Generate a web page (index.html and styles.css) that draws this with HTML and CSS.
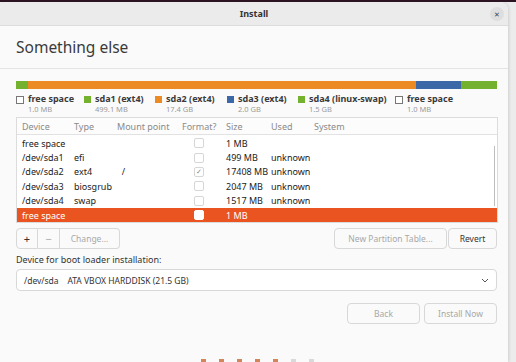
FILE: index.html
```html
<!DOCTYPE html>
<html lang="en">
<head>
  <meta charset="UTF-8" />
  <title>Install</title>
  <link rel="stylesheet" href="styles.css">
</head>
<body>
  <div class="window">
    <header class="titlebar">
      Install
      <span class="close">&#x2715;</span>
    </header>

    <div class="heading">Something else</div>

    <div class="content">
      <div class="disk-bar">
        <span class="seg green" style="width:12px"></span>
        <span class="seg orange" style="width:388px"></span>
        <span class="seg blue" style="width:45px"></span>
        <span class="seg green" style="width:36px"></span>
      </div>

      <div class="legend">
        <div class="legend-item" style="width:68px"><i class="sq empty"></i><div><b>free space</b><small>1.0 MB</small></div></div>
        <div class="legend-item" style="width:71px"><i class="sq green"></i><div><b>sda1 (ext4)</b><small>499.1 MB</small></div></div>
        <div class="legend-item" style="width:72px"><i class="sq orange"></i><div><b>sda2 (ext4)</b><small>17.4 GB</small></div></div>
        <div class="legend-item" style="width:71px"><i class="sq blue"></i><div><b>sda3 (ext4)</b><small>2.0 GB</small></div></div>
        <div class="legend-item" style="width:97px"><i class="sq green"></i><div><b>sda4 (linux-swap)</b><small>1.5 GB</small></div></div>
        <div class="legend-item"><i class="sq empty"></i><div><b>free space</b><small>1.0 MB</small></div></div>
      </div>

      <div class="table">
        <div class="row head">
          <span class="c-dev">Device</span>
          <span class="c-type">Type</span>
          <span class="c-mount">Mount point</span>
          <span class="c-fmt">Format?</span>
          <span class="c-size">Size</span>
          <span class="c-used">Used</span>
          <span>System</span>
        </div>
        <div class="rows">
          <div class="row">
            <span class="c-dev">free space</span><span class="c-type"></span><span class="c-mount"></span>
            <span class="c-fmt"><i class="cb"></i></span><span class="c-size">1 MB</span><span class="c-used"></span>
          </div>
          <div class="row">
            <span class="c-dev">/dev/sda1</span><span class="c-type">efi</span><span class="c-mount"></span>
            <span class="c-fmt"><i class="cb"></i></span><span class="c-size">499 MB</span><span class="c-used">unknown</span>
          </div>
          <div class="row">
            <span class="c-dev">/dev/sda2</span><span class="c-type">ext4</span><span class="c-mount">&nbsp;&nbsp;/</span>
            <span class="c-fmt"><i class="cb">&#x2713;</i></span><span class="c-size">17408 MB</span><span class="c-used">unknown</span>
          </div>
          <div class="row">
            <span class="c-dev">/dev/sda3</span><span class="c-type">biosgrub</span><span class="c-mount"></span>
            <span class="c-fmt"><i class="cb"></i></span><span class="c-size">2047 MB</span><span class="c-used">unknown</span>
          </div>
          <div class="row">
            <span class="c-dev">/dev/sda4</span><span class="c-type">swap</span><span class="c-mount"></span>
            <span class="c-fmt"><i class="cb"></i></span><span class="c-size">1517 MB</span><span class="c-used">unknown</span>
          </div>
          <div class="row selected">
            <span class="c-dev">free space</span><span class="c-type"></span><span class="c-mount"></span>
            <span class="c-fmt"><i class="cb"></i></span><span class="c-size">1 MB</span><span class="c-used"></span>
          </div>
          <span class="scrollbar"></span>
        </div>
      </div>

      <div class="toolbar">
        <div class="btn-group">
          <button class="btn sq-btn">+</button>
          <button class="btn sq-btn dim">&minus;</button>
          <button class="btn dim change">Change...</button>
        </div>
        <div class="btn-group right">
          <button class="btn dim npt">New Partition Table...</button>
          <button class="btn revert">Revert</button>
        </div>
      </div>

      <div class="boot-label">Device for boot loader installation:</div>
      <div class="select">
        <span>/dev/sda&nbsp;&nbsp;&nbsp;&nbsp;ATA VBOX HARDDISK (21.5 GB)</span>
        <svg width="8" height="5" viewBox="0 0 8 5"><path d="M1 1l3 3 3-3" fill="none" stroke="#555" stroke-width="1"/></svg>
      </div>

      <div class="actions">
        <button class="btn dim act">Back</button>
        <button class="btn dim act">Install Now</button>
      </div>

      <div class="dots">
        <i class="on"></i><i class="on"></i><i class="on"></i><i class="on"></i><i class="on"></i><i></i><i></i>
      </div>
    </div>
  </div>
</body>
</html>
```

FILE: styles.css
```css
body {
  margin: 0;
  background: #ececec;
  font-family: "Noto Sans", "Open Sans", sans-serif;
  color: #3d3d3d;
  overflow: hidden;
  border-top: 2px solid #2b1421;
}

.window {
  width: 508px;
  height: 360px;
  background: #fafafa;
  border-radius: 8px 8px 0 0;
  box-shadow: 1px 0 3px rgba(0, 0, 0, 0.12);
  overflow: hidden;
}

.titlebar {
  height: 23px;
  background: #ebebeb;
  border-bottom: 1px solid #dcdcdc;
  display: flex;
  align-items: center;
  justify-content: center;
  font-size: 9px;
  font-weight: bold;
  color: #333;
  position: relative;
}

.close {
  position: absolute;
  right: 4px;
  top: 5px;
  width: 14px;
  height: 14px;
  border-radius: 50%;
  background: #dedede;
  font-size: 7px;
  font-weight: normal;
  display: flex;
  align-items: center;
  justify-content: center;
  color: #444;
}

.heading {
  height: 42px;
  padding-left: 16px;
  display: flex;
  align-items: center;
  font-size: 15.5px;
  color: #3a3a3a;
  border-bottom: 1px solid #e4e4e4;
}

.content {
  padding: 12px 11px 0 16px;
}

.disk-bar {
  display: flex;
  height: 8px;
  width: 481px;
}

.seg { display: block; height: 100%; }
.green { background: #73b12f; }
.orange { background: #ec8a23; }
.blue { background: #3c68a8; }

.legend {
  display: flex;
  margin-top: 5px;
  height: 23px;
}

.legend-item {
  display: flex;
  flex-shrink: 0;
  gap: 4px;
  font-size: 9px;
  line-height: 10px;
}

.legend-item b {
  display: block;
  font-weight: bold;
  color: #3a3a3a;
}

.legend-item small {
  display: block;
  font-size: 7.5px;
  line-height: 10px;
  color: #9a9a9a;
}

.sq {
  display: block;
  width: 7px;
  height: 7px;
  margin-top: 2px;
}

.sq.empty {
  width: 6px;
  height: 6px;
  border: 1px solid #777;
  background: #fff;
}

.table {
  width: 480px;
  height: 104px;
  border: 1px solid #dcdcdc;
  background: #fff;
  font-size: 9px;
}

.row {
  display: flex;
  align-items: center;
  height: 14.4px;
  padding-left: 5px;
  color: #222;
}

.row.head {
  height: 16px;
  color: #8a8a8a;
  border-bottom: 1px solid #e2e2e2;
  background: #fcfcfc;
}

.rows {
  position: relative;
  padding-top: 1px;
}

.row.selected {
  background: #e95420;
  color: #fff;
}

.c-dev { width: 52px; }
.c-type { width: 43px; }
.c-mount { width: 65px; }
.c-fmt { width: 44px; }
.c-fmt .cb { margin-left: 12px; }
.c-size { width: 45px; }
.c-used { width: 43px; }

.cb {
  display: flex;
  align-items: center;
  justify-content: center;
  width: 8px;
  height: 8px;
  border: 1px solid #d6d6d6;
  border-radius: 2px;
  font-style: normal;
  font-size: 7px;
  color: #888;
  background: #fff;
}

.selected .cb { border-color: #fff; }

.scrollbar {
  position: absolute;
  right: 2px;
  top: 11px;
  width: 1px;
  height: 60px;
  background: #bdbdbd;
}

.toolbar {
  display: flex;
  justify-content: space-between;
  width: 481px;
  margin-top: 5px;
}

.btn-group { display: flex; }

.btn {
  font-family: inherit;
  height: 21px;
  font-size: 8.5px;
  color: #333;
  background: #fafafa;
  border: 1px solid #d8d8d8;
  padding: 0;
  margin: 0;
}

.btn.dim { color: #a8a8a8; }

.sq-btn { width: 22px; font-size: 11px; }
.btn-group .btn + .btn { border-left: none; }
.btn-group .btn:first-child { border-radius: 4px 0 0 4px; }
.btn-group .btn:last-child { border-radius: 0 4px 4px 0; }
.change { width: 60px; }
.btn-group.right .revert { width: 49px; border-left: 1px solid #d8d8d8; margin-left: 1px; border-radius: 4px; }
.btn-group.right .npt { width: 113px; border-radius: 4px; }

.boot-label {
  font-size: 9px;
  margin-top: 4px;
  color: #333;
}

.select {
  width: 465px;
  height: 20px;
  margin-top: 3px;
  border: 1px solid #d8d8d8;
  border-radius: 4px;
  background: #fff;
  display: flex;
  align-items: center;
  justify-content: space-between;
  padding: 0 7px;
  font-size: 8.5px;
  color: #333;
}

.actions {
  display: flex;
  justify-content: flex-end;
  gap: 4px;
  width: 481px;
  margin-top: 12px;
}

.act {
  width: 73px;
  border-radius: 4px;
}

.dots {
  display: flex;
  gap: 13px;
  margin: 35px 0 0 185px;
}

.dots i {
  width: 5px;
  height: 5px;
  background: #d9d9d9;
}

.dots i.on { background: #d2845a; }
```
